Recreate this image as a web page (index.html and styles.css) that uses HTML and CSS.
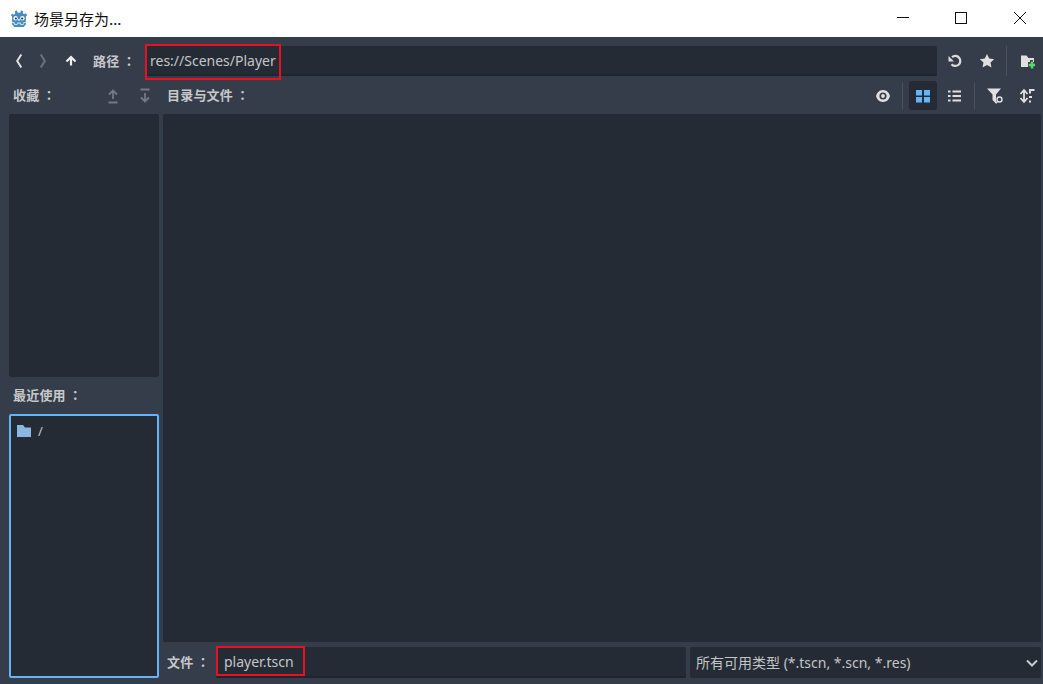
FILE: index.html
```html
<!DOCTYPE html>
<html lang="zh">
<head>
<meta charset="utf-8">
<title>场景另存为...</title>
<link rel="stylesheet" href="styles.css">
</head>
<body>
<header class="titlebar">
  <svg class="logo" width="18" height="18" viewBox="0 0 18 18"><path fill="#478cbf" d="M5 1 7 .5 7.800 2.800h2.400L11 .5l2 .5-.2 2.300 1.300 1 1.700-1L17.200 5l-1.300 1.500v6.300l-2.400.4-.3 1.700-2.300.1-.2-1.500H7.300l-.2 1.500-2.300-.1-.3-1.700-2.400-.4V6.500L.8 5l1.400-1.200 1.700 1 1.300-1z"/><path fill="#478cbf" d="M2.100 12.800 4.500 13.200l.3 1.700 2.300.1.200-1.500h3.400l.2 1.500 2.300-.1.300-1.700 2.400-.4.100 1.500-2.300 2.700H4.300L2 14.300z"/><path fill="#d5e6f3" d="M2.100 11.800l2.500.4.300 1.700 2.100.1.200-1.500h3.600l.2 1.500 2.100-.1.300-1.700 2.500-.4v1l-2 .4-.3 1.600-3.300.2-.1-1.400H7.500l-.1 1.400-3.300-.2-.3-1.600-1.700-.4z"/><circle cx="5.600" cy="8.300" r="2.200" fill="#fff"/><circle cx="12.400" cy="8.300" r="2.200" fill="#fff"/><circle cx="5.900" cy="8.500" r="1.100" fill="#33383f"/><circle cx="12.100" cy="8.500" r="1.100" fill="#33383f"/><rect x="8.300" y="9" width="1.400" height="1.800" fill="#fff"/></svg>
  <span class="title-text">场景另存为...</span>
  <div class="win-buttons">
    <svg class="win-btn" width="46" height="37" viewBox="0 0 46 37"><path d="M17 17.500h12" stroke="#111" fill="none"/></svg>
    <svg class="win-btn" width="46" height="37" viewBox="0 0 46 37"><rect x="17.500" y="12.500" width="11" height="11" stroke="#111" fill="none"/></svg>
    <svg class="win-btn" width="46" height="37" viewBox="0 0 46 37"><path d="M17 12l12 12M29 12 17 24" stroke="#111" fill="none"/></svg>
  </div>
</header>

<main class="dialog">
  <div class="path-row">
    <div class="nav-icons">
      <svg class="ico" width="16" height="16" viewBox="0 0 16 16"><path d="M10.300 1.500 6.200 8l4.100 6.500" stroke="#e0e0e0" stroke-width="2" fill="none"/></svg>
      <svg class="ico ico-next" width="16" height="16" viewBox="0 0 16 16"><path d="M5.700 1.500 9.800 8l-4.100 6.500" stroke="#6b7280" stroke-width="2" fill="none"/></svg>
      <svg class="ico ico-up" width="16" height="16" viewBox="0 0 16 16"><path d="M8 12.500V4.500M3.500 8.500 8 4l4.500 4.500" stroke="#eee" stroke-width="2.200" fill="none"/></svg>
    </div>
    <span class="label path-label">路径<span class="colon" lang="zh-Hant">：</span></span>
    <div class="field path-field">res://Scenes/Player</div>
    <div class="path-tools">
      <svg class="ico" width="16" height="16" viewBox="0 0 16 16"><path d="M5 4.200a5 5 0 1 1 -.5 7" stroke="#dcdcdc" stroke-width="2.200" fill="none"/><path d="M1.500 3v5.500h5.500z" fill="#dcdcdc"/></svg>
      <svg class="ico ico-star" width="16" height="16" viewBox="0 0 16 16"><path d="m8 1 2.200 4.600 5 .6-3.700 3.400 1 4.900L8 12.100l-4.500 2.400 1-4.900L.8 6.200l5-.6z" fill="#e0e0e0"/></svg>
      <i class="sep sep-path"></i>
      <svg class="ico" width="16" height="16" viewBox="0 0 16 16"><path d="M2 2.500h5.500L9.500 5H15v9H2z" fill="#e0e0e0"/><path d="M11 7h3v2h2v5h-2v2h-3v-2H9V9h2z" fill="#363d4a"/><path d="M11.800 8.500h2.400v2.300H16v2.400h-1.800v2.300h-2.400v-2.300H9.700v-2.400h2.100z" fill="#4fe06a"/></svg>
    </div>
  </div>

  <div class="columns">
    <aside class="side">
      <div class="side-head">
        <span class="label">收藏<span class="colon" lang="zh-Hant">：</span></span>
        <div class="fav-arrows">
          <svg class="ico" width="16" height="16" viewBox="0 0 16 16"><path d="M8 11V2.500M4 6.500l4-4 4 4M3.500 14.500h9" stroke="#727884" stroke-width="1.800" fill="none"/></svg>
          <svg class="ico" width="16" height="16" viewBox="0 0 16 16"><path d="M8 5v8.500M4 9.500l4 4 4-4M3.500 1.500h9" stroke="#727884" stroke-width="1.800" fill="none"/></svg>
        </div>
      </div>
      <div class="panel fav-panel"></div>
      <div class="recent-head"><span class="label">最近使用<span class="colon" lang="zh-Hant">：</span></span></div>
      <div class="panel recent-panel">
        <div class="recent-item">
          <svg width="16" height="16" viewBox="0 0 16 16"><path d="M1 2h6l2 2.500h6V14H1z" fill="#8ab8e0"/></svg>
          <span>/</span>
        </div>
      </div>
    </aside>

    <section class="content">
      <div class="content-head">
        <span class="label">目录与文件<span class="colon" lang="zh-Hant">：</span></span>
        <div class="view-tools">
          <svg class="ico" width="16" height="16" viewBox="0 0 16 16"><path d="M8 2c3.800 0 6.200 3 7 6-.8 3-3.200 6-7 6s-6.200-3-7-6c.8-3 3.200-6 7-6z" fill="#e0e0e0"/><circle cx="8" cy="8" r="3.600" fill="#363d4a"/><circle cx="8" cy="8" r="1.900" fill="#e0e0e0"/></svg>
          <i class="sep"></i>
          <span class="toggle"><svg width="14" height="14" viewBox="0 0 14 14"><path d="M0 1h6v5.500H0zM8 1h6v5.500H8zM0 8h6v5.500H0zM8 8h6v5.500H8z" fill="#66b3f7"/></svg></span>
          <svg class="ico ico-list" width="16" height="16" viewBox="0 0 16 16"><path d="M1 2.500h2.500v2H1zM5.500 2.500H14v2H5.500zM1 7h2.500v2H1zM5.500 7H14v2H5.500zM1 11.500h2.500v2H1zM5.500 11.500H14v2H5.500z" fill="#e0e0e0"/></svg>
          <i class="sep sep-list"></i>
          <svg class="ico ico-filter" width="18" height="18" viewBox="0 0 18 18"><path d="M1 1.500h14L10 7.500v9L6.500 13V7.500z" fill="#e0e0e0"/><circle cx="13.500" cy="12.500" r="2.500" fill="none" stroke="#e0e0e0" stroke-width="1.400"/><path d="m11.700 14.300-2 2" stroke="#e0e0e0" stroke-width="1.400"/></svg>
          <svg class="ico ico-sort" width="16" height="16" viewBox="0 0 16 16"><path d="M5 2.500v11M1.500 6 5 2l3.500 4M1.500 10 5 14l3.500-4" stroke="#e0e0e0" stroke-width="1.800" fill="none"/><path d="M10 1h5.500v2H12v2.500h-2zM10 8h3v2h-3zM10 12.500h2v2h-2z" fill="#e0e0e0"/></svg>
        </div>
      </div>
      <div class="panel file-panel"></div>
      <div class="bottom-row">
        <span class="label file-label">文件<span class="colon" lang="zh-Hant">：</span></span>
        <div class="field file-field">player.tscn</div>
        <div class="select">
          <span class="select-text">所有可用类型 (*.tscn, *.scn, *.res)</span>
          <svg width="16" height="16" viewBox="0 0 16 16"><path d="m3 5.500 5 5 5-5" stroke="#c8cacd" stroke-width="2" fill="none"/></svg>
        </div>
      </div>
    </section>
  </div>
  <div class="mark mark-path"></div>
  <div class="mark mark-file"></div>
</main>
</body>
</html>
```
FILE: styles.css
```css
* { box-sizing: border-box; }
html, body { margin: 0; height: 100%; }
body {
  width: 1043px;
  height: 684px;
  overflow: hidden;
  display: flex;
  flex-direction: column;
  font-family: "Noto Sans", "Noto Sans CJK SC", sans-serif;
  font-size: 14px;
  color: #cdcfd2;
  background: #363d4a;
}
.titlebar {
  height: 37px;
  flex: none;
  background: #fff;
  display: flex;
  align-items: center;
  padding-left: 10px;
}
.logo { flex: none; }
.title-text {
  margin-left: 6px;
  color: #111;
  font-family: "Noto Sans CJK SC", sans-serif;
  font-size: 15px;
}
.win-buttons { margin-left: auto; display: flex; }
.win-btn { display: block; margin-left: 12px; }
.win-btn:first-child { margin-left: 0; }
.win-btn:last-child { margin-left: 13px; }

.dialog { position: relative; flex: 1; display: flex; flex-direction: column; padding: 9px 2px 6px 9px; }
.ico { display: block; flex: none; }
.label { font-weight: 700; font-size: 13px; color: #c6c8cb; font-family: "Noto Sans CJK SC", sans-serif; letter-spacing: .2px; white-space: nowrap; padding-bottom: 2px; }
.colon { font-family: "Noto Sans CJK TC", sans-serif; margin-left: 3px; }

.path-row { height: 30px; display: flex; align-items: center; flex: none; }
.nav-icons { display: flex; align-items: center; gap: 8px; padding-left: 2px; }
.ico-up { margin-left: 4px; }
.path-label { margin-left: 14px; width: 53px; }
.field {
  background: #252b34;
  border-radius: 2px;
  box-shadow: inset 0 -2px 0 #20252d;
  color: #c3c5c8;
  display: flex;
  align-items: center;
  padding-left: 4px;
  padding-bottom: 2px;
  white-space: nowrap;
}
.path-field { flex: 1; height: 30px; padding-bottom: 1px; }
.path-tools { display: flex; align-items: center; width: 104px; padding-left: 10px; }
.ico-star { margin-left: 16px; }
.sep { display: block; width: 1px; height: 30px; background: #4a515e; flex: none; }
.sep-path { margin-left: 11px; margin-right: 12px; }

.columns { flex: 1; display: flex; min-height: 0; margin-top: 5px; gap: 4px; }
.side { width: 150px; flex: none; display: flex; flex-direction: column; }
.side-head, .content-head { height: 29px; flex: none; display: flex; align-items: center; }
.side-head { padding-left: 4px; justify-content: space-between; padding-right: 6px; }
.fav-arrows { display: flex; gap: 16px; }
.panel { background: #252b34; border-radius: 2px; }
.fav-panel { flex: 0 0 263px; margin-top: 4px; }
.recent-head { flex: 0 0 37px; display: flex; align-items: center; padding-left: 4px; }
.recent-panel { flex: 1; border: 2px solid #66b3f7; padding: 6px 5px; }
.recent-item { display: flex; align-items: center; gap: 6px; height: 18px; color: #c3c5c8; font-size: 13px; }

.content { flex: 1; min-width: 0; display: flex; flex-direction: column; }
.content-head { padding-left: 4px; justify-content: space-between; }
.view-tools { display: flex; align-items: center; padding-right: 6px; }
.view-tools .sep { height: 28px; margin-left: 11px; margin-right: 6px; }
.toggle { width: 28px; height: 29px; background: #252b34; border-radius: 3px; display: flex; align-items: center; justify-content: center; }
.ico-list { margin-left: 10px; }
.view-tools .sep-list { margin-left: 11px; margin-right: 11px; }
.ico-sort { margin-left: 15px; }
.file-panel { flex: 1; min-height: 0; margin-top: 4px; }
.bottom-row { flex: none; height: 31px; margin-top: 5px; display: flex; align-items: center; }
.file-label { width: 53px; padding-left: 4px; }
.file-field { width: 470px; height: 31px; padding-left: 8px; }
.select {
  flex: 1;
  height: 31px;
  margin-left: 4px;
  background: #252b34;
  border-radius: 2px;
  display: flex;
  align-items: center;
  justify-content: space-between;
  padding: 0 1px 0 6px;
  color: #c3c5c8;
  font-size: 14px;
}
.select-text { padding-bottom: 2px; }
.mark { position: absolute; border: 2px solid #e81123; pointer-events: none; }
.mark-path { left: 145px; top: 7px; width: 136px; height: 36px; }
.mark-file { left: 216px; top: 609px; width: 89px; height: 30px; }
```
